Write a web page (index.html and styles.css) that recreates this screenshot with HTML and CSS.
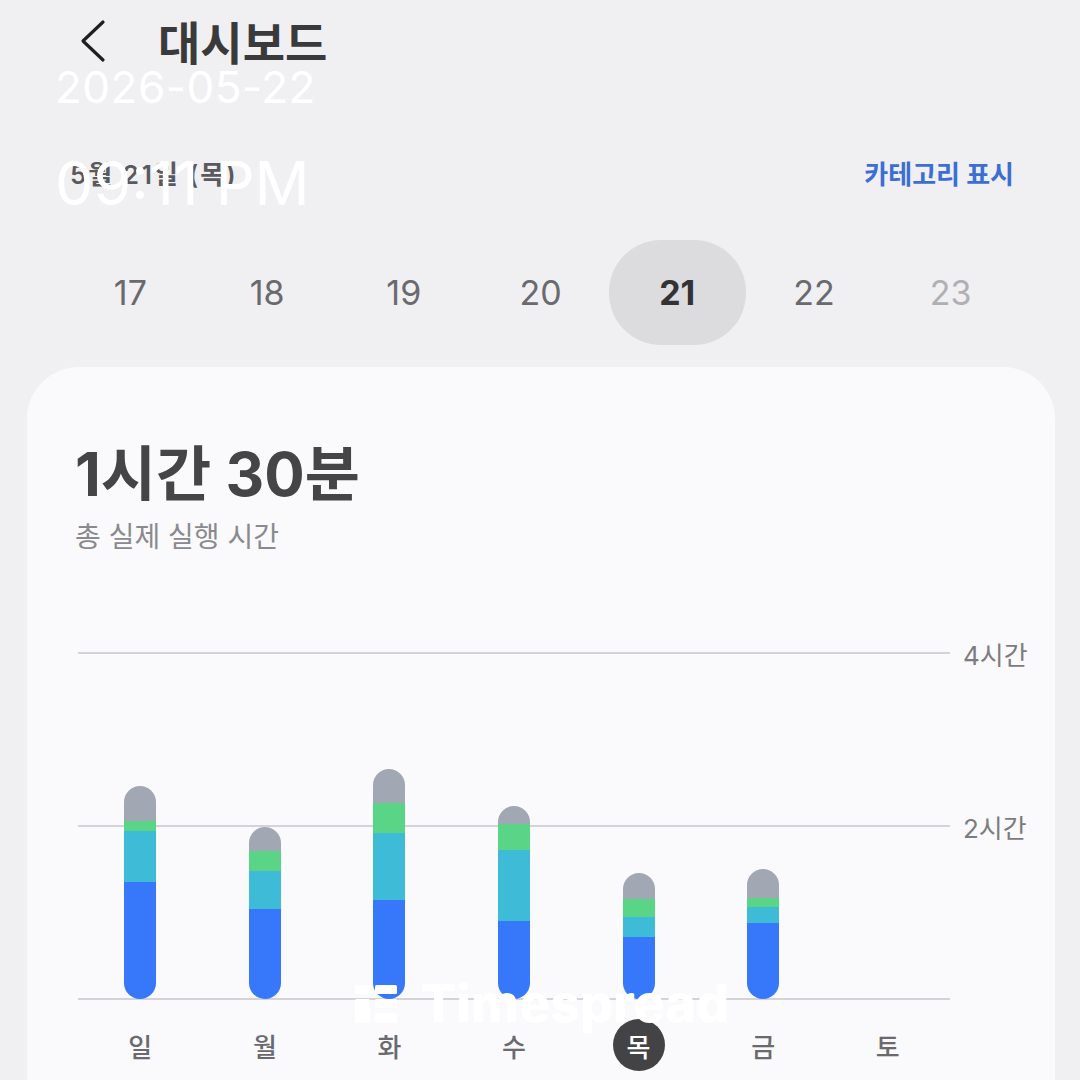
FILE: index.html
```html
<!DOCTYPE html>
<html lang="ko">
<head>
  <meta charset="UTF-8" />
  <title>대시보드</title>
  <meta name="viewport" content="width=device-width, initial-scale=1.0" />
  <link rel="stylesheet" href="styles.css">
</head>
<body>

<div class="topbar">
  <svg class="back" width="28" height="44" viewBox="0 0 28 44">
    <path d="M25 3 L5 22 L25 41" fill="none" stroke="#1f1f1f" stroke-width="3.2" stroke-linecap="round" stroke-linejoin="round"/>
  </svg>
  <h1>대시보드</h1>
</div>

<div class="date-row">
  <span class="date">5월 21일 (목)</span>
  <span class="cat-link">카테고리 표시</span>
</div>

<div class="days">
  <div class="day">17</div>
  <div class="day">18</div>
  <div class="day">19</div>
  <div class="day">20</div>
  <div class="day active">21</div>
  <div class="day">22</div>
  <div class="day future">23</div>
</div>

<div class="card">
  <div class="total">1시간 30분</div>
  <div class="total-sub">총 실제 실행 시간</div>

  <div class="chart">
    <div class="grid-row"><div class="line"></div><span class="tick">4시간</span></div>
    <div class="grid-row"><div class="line"></div><span class="tick">2시간</span></div>
    <div class="grid-row"><div class="line"></div><span class="tick"></span></div>

    <div class="bars">
      <div class="col"><div class="bar">
        <div class="seg gray" style="height:35px"></div><div class="seg green" style="height:10px"></div><div class="seg cyan" style="height:51px"></div><div class="seg blue" style="height:117px"></div>
      </div></div>
      <div class="col"><div class="bar">
        <div class="seg gray" style="height:24px"></div><div class="seg green" style="height:20px"></div><div class="seg cyan" style="height:38px"></div><div class="seg blue" style="height:90px"></div>
      </div></div>
      <div class="col"><div class="bar">
        <div class="seg gray" style="height:34px"></div><div class="seg green" style="height:30px"></div><div class="seg cyan" style="height:67px"></div><div class="seg blue" style="height:99px"></div>
      </div></div>
      <div class="col"><div class="bar">
        <div class="seg gray" style="height:18px"></div><div class="seg green" style="height:26px"></div><div class="seg cyan" style="height:71px"></div><div class="seg blue" style="height:78px"></div>
      </div></div>
      <div class="col"><div class="bar">
        <div class="seg gray" style="height:26px"></div><div class="seg green" style="height:18px"></div><div class="seg cyan" style="height:20px"></div><div class="seg blue" style="height:62px"></div>
      </div></div>
      <div class="col"><div class="bar">
        <div class="seg gray" style="height:29px"></div><div class="seg green" style="height:9px"></div><div class="seg cyan" style="height:16px"></div><div class="seg blue" style="height:76px"></div>
      </div></div>
      <div class="col"></div>
    </div>
  </div>

  <div class="weekdays">
    <span>일</span><span>월</span><span>화</span><span>수</span><span class="today">목</span><span>금</span><span>토</span>
  </div>
</div>

<!-- overlays on the capture -->
<div class="stamp">
  <div class="stamp-date">2026-05-22</div>
  <div class="stamp-time">09:11 PM</div>
</div>

<div class="watermark">
  <svg width="42" height="38" viewBox="0 0 42 38">
    <rect x="0" y="0" width="15" height="9" rx="1.5" fill="#fff"/>
    <rect x="0" y="14" width="15" height="24" rx="1.5" fill="#fff"/>
    <rect x="20" y="0" width="22" height="9" rx="1.5" fill="#fff"/>
    <rect x="20" y="14" width="22" height="9" rx="1.5" fill="#fff"/>
    <rect x="20" y="28" width="22" height="10" rx="1.5" fill="#fff"/>
  </svg>
  <span>Timespread</span>
</div>

</body>
</html>
```

FILE: styles.css
```css
body {
  margin: 0; background: #f0f0f3; position: relative;
  font-family: Inter, "Noto Sans CJK KR", sans-serif;
  height: 1080px; overflow: hidden;
}

.topbar { height: 80px; display: flex; align-items: center; padding-left: 78px; gap: 52px; }
.topbar h1 { margin: 0; font-size: 46px; font-weight: 700; color: #3a3a3c; font-family: "Noto Sans CJK KR", sans-serif; }
.back { margin-top: 2px; }

.date-row {
  margin-top: 70px; height: 44px; padding: 0 66px 0 70px;
  display: flex; align-items: center; justify-content: space-between;
}
.date { font-size: 26px; font-weight: 600; color: #5a5a5e; letter-spacing: 2px; }
.cat-link { font-size: 26px; font-weight: 700; color: #3b6fd4; }

.days {
  margin-top: 46px; margin-left: 62px; width: 957px;
  display: grid; grid-template-columns: repeat(7, 1fr);
}
.day {
  height: 105px; border-radius: 52px;
  display: flex; align-items: center; justify-content: center;
  font-size: 34px; color: #6a6a6e;
}
.day.active { background: #dcdcdf; color: #333336; font-weight: 700; }
.day.future { color: #b0b0b4; }

.card {
  margin: 22px 25px 0 27px; height: 800px;
  background: #fafafc; border-radius: 52px 52px 0 0;
  padding: 72px 27px 0 48px;
}
.total { font-size: 60px; font-weight: 700; color: #454548; line-height: 70px; }
.total-sub { margin-top: 10px; font-size: 28px; color: #8a8a8e; line-height: 36px; }

.chart {
  position: relative; margin: 83px 0 0 3px;
  height: 376px; display: flex; flex-direction: column; justify-content: space-between;
}
.grid-row { height: 30px; display: flex; align-items: center; }
.line { flex: 1; height: 2px; background: #d4d4d8; }
.tick { width: 78px; box-sizing: border-box; padding-left: 13px; font-size: 26px; color: #7c7c80; }

.bars {
  position: absolute; left: 0; right: 78px; bottom: 15px;
  display: grid; grid-template-columns: repeat(7, 1fr); align-items: end;
}
.col { display: flex; justify-content: center; }
.bar { width: 32px; border-radius: 16px; overflow: hidden; display: flex; flex-direction: column; }
.seg.gray { background: #a1a7b3; }
.seg.green { background: #5ad587; }
.seg.cyan { background: #3ebcd7; }
.seg.blue { background: #3778fb; }

.weekdays {
  margin: 5px 78px 0 3px;
  display: grid; grid-template-columns: repeat(7, 1fr); justify-items: center;
}
.weekdays span {
  width: 52px; height: 52px; border-radius: 50%;
  display: flex; align-items: center; justify-content: center;
  font-size: 26px; color: #6a6a6e; font-weight: 500;
}
.weekdays .today { background: #434346; color: #fff; }

.stamp { position: absolute; left: 55px; top: 59px; color: #fff; font-family: Inter, sans-serif; }
.stamp-date { font-size: 44px; line-height: 56px; letter-spacing: 0.5px; }
.stamp-time { margin-top: 33px; font-size: 61px; line-height: 70px; }

.watermark {
  position: absolute; left: 355px; top: 972px;
  display: flex; align-items: center; gap: 24px;
  color: #fff; font-size: 52px; font-weight: 800; font-family: Inter, sans-serif;
}
```
